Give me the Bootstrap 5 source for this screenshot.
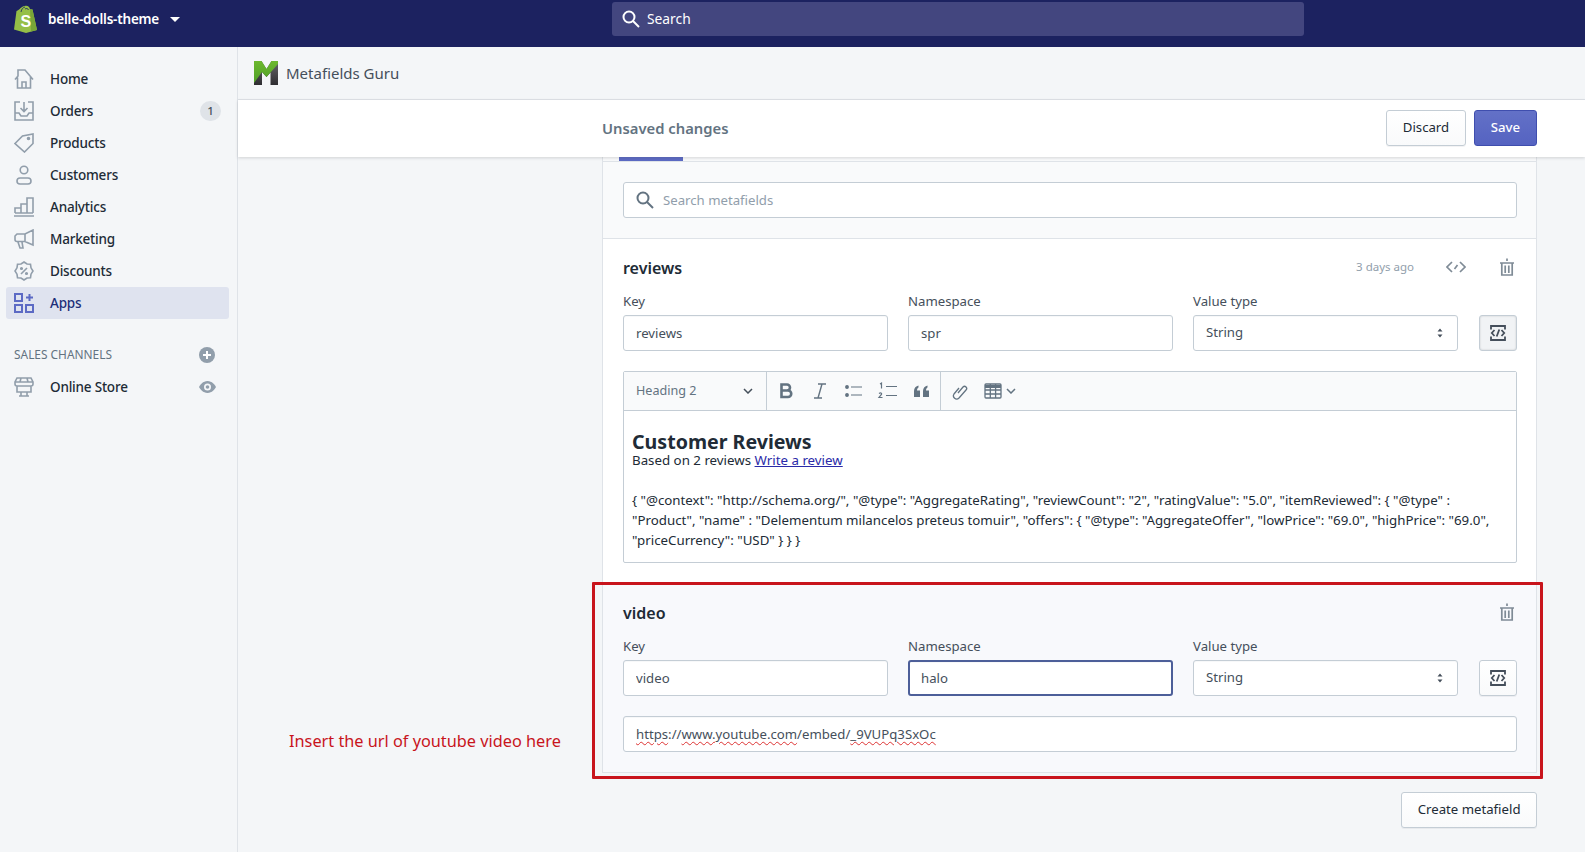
<!DOCTYPE html>
<html lang="en"><head><meta charset="utf-8"><title>Metafields Guru</title>
<link href="https://cdn.jsdelivr.net/npm/bootstrap@5.3.0/dist/css/bootstrap.min.css" rel="stylesheet">
<style>
html,body{height:852px;overflow:hidden}
body{font-family:"Noto Sans","Open Sans",sans-serif;font-size:13.2px;color:#212b36;background:#f4f6f8}
.topbar{height:47px;background:#1c2260;flex:none}
.brand-slot{width:238px;padding-left:13px;gap:10px;margin-top:-9px}
.shop-name{font-size:13.5px;font-weight:600;color:#fff;letter-spacing:-.2px}
.shop-caret{width:0;height:0;border-left:5px solid transparent;border-right:5px solid transparent;border-top:5px solid #fff;margin-left:1px}
.top-search{width:692px;height:34px;margin-left:374px;margin-top:-9px;background:#43467f;border-radius:3px;color:#fff;padding-left:10px;gap:7px;font-size:13.8px}
.side{width:238px;flex:none;border-right:1px solid #dfe3e8;padding-top:16px;padding-left:6px;padding-right:8px}
.nav-row{height:32px;padding-left:8px;gap:16px;color:#212b36;text-decoration:none;font-weight:500;border-radius:3px;font-size:13.5px;letter-spacing:-.2px}
.nav-row svg{width:20px;height:20px;flex:none;color:#919eab}
.nav-row.on{background:#dfe3ef;color:#202e78}
.nav-row.on svg{color:#5c6ac4}
.pill{margin-left:auto;margin-right:8px;width:21px;height:20px;border-radius:10px;background:#dfe3e8;font-size:11.5px;color:#454f5b;letter-spacing:0}
.chan-head{height:32px;margin-top:20px;padding-left:8px;padding-right:14px;color:#637381;font-size:11.9px}
.nav-row svg.right-ico{margin-left:auto;margin-right:13px;width:17px;height:12px}
.work{flex:1;min-width:0;min-height:0}
.appbar{height:53px;padding-left:15px;gap:7px;font-size:15px;color:#454f5b;flex:none;border-bottom:1px solid #dfe3e8}
.savebar{height:57px;background:#fff;box-shadow:0 1px 3px rgba(63,63,68,.2);flex:none;position:relative;z-index:2;padding-left:364px;padding-right:48px}
.save-title{font-size:14.8px;font-weight:600;color:#637381}
.save-btns{margin-top:-2px}
.btn-plain{height:36px;background:linear-gradient(#fff,#f9fafb);border:1px solid #c4cdd5;border-radius:3px;color:#212b36;font-size:13.2px;box-shadow:0 1px 0 rgba(22,29,37,.05);padding:0 15.5px}
.btn-prime{height:36px;background:linear-gradient(#6371c7,#5563c1);border:1px solid #3f4eae;border-radius:3px;color:#fff;font-size:13.2px;font-weight:500;padding:0 16px;margin-left:8px}
.canvas{padding-left:364px;padding-right:48px}
.mf-card{border-radius:0;border:0;border-left:1px solid #dfe3e8;border-right:1px solid #dfe3e8;background:#fff}
.tab-strip{height:4px;background:#f9fafb}
.tab-bar{display:block;width:64px;height:4px;margin-left:16px;background:#5c6ac4}
.find-zone{background:#f9fafb;padding:20px 19px 20px 20px;border-bottom:1px solid #dfe3e8;border-top:1px solid #dfe3e8}
.find-box{height:36px;border:1px solid #c4cdd5;border-radius:3px;background:#fff;padding-left:12px;gap:9px;color:#919eab}
.find-box span{padding-top:2px}
.mf-sec{padding:19px 19px 21px 20px}
.mf-sec.soft{background:#f8f9fc;position:relative;border-bottom:1px solid #dfe3e8;padding-bottom:20px}
.sec-title{font-size:16px;font-weight:600;height:20px;line-height:20px;margin-bottom:15px;color:#212b36}
.meta-group{margin-top:-2px}
.meta-time{font-size:11.5px;color:#919eab;font-weight:400}
.ico-code{margin-left:32px;margin-right:34px}
.ico-bin{margin-right:3px}
.soft .ico-bin{margin-top:-2px}
.field-row{display:flex;gap:20px;align-items:flex-end}
.field-col{width:265px;flex:none}
.field-lab{font-size:13.2px;line-height:17px;color:#454f5b;margin-bottom:5px;display:block}
.mf-input.form-control,.mf-input.form-select{height:36px;border:1px solid #c4cdd5;border-radius:3px;font-size:13.2px;color:#454f5b;padding:0 12px;box-shadow:inset 0 1px 0 rgba(99,115,129,.05)}
.mf-input.form-select{background-color:#fff;background-size:8px 12px;background-position:right 13px center;background-image:url("data:image/svg+xml,%3Csvg xmlns='http://www.w3.org/2000/svg' width='8' height='12'%3E%3Cpath d='M4 1.500l2.500 3h-5zM4 10.500L1.500 7.500h5z' fill='%23454f5b'/%3E%3C/svg%3E")}
.mf-input.lit{border:2px solid #4d5f99;padding-left:11px}
.code-btn{width:38px;height:36px;flex:none;margin-left:1px;padding:0;border:1px solid #c4cdd5;border-radius:3px;background:linear-gradient(#fff,#f9fafb);box-shadow:0 1px 0 rgba(22,29,37,.05);color:#454f5b}
.code-btn.on{background:#f1f3f5;box-shadow:inset 0 0 2px rgba(22,29,37,.2)}
.rte{margin-top:20px;border:1px solid #c4cdd5;border-radius:2px;background:#fff}
.rte-bar{height:39px;background:#f9fafb;border-bottom:1px solid #c4cdd5;color:#637381}
.rte-sel{width:143px;height:100%;border-right:1px solid #c4cdd5;padding:0 13px 0 12px;font-size:12.6px}
.rte-group{height:100%;border-right:1px solid #c4cdd5;width:174px;padding-left:8px;gap:12px}
.rte-tail{padding-left:10px;gap:15px}
.rte-body{padding:19px 19px 10px 8px;font-size:13.3px;line-height:20px;color:#212b36;height:151px}
.rte-h{font-size:19.6px;font-weight:700;line-height:24px;height:24px;margin-bottom:-4px;color:#212b36}
.rte-a{color:#2a2aa8}
.rte-json{margin-top:20px}
.url-box{margin-top:20px;padding-top:0;line-height:35px;height:36px;white-space:nowrap}
.sq{text-decoration:underline wavy #d33;text-decoration-thickness:1px;text-underline-offset:2px}
.red-frame{position:absolute;left:-11px;right:-7px;top:-2px;bottom:-7px;border:3.5px solid #c8141c;border-radius:1px;pointer-events:none}
.red-note{position:absolute;left:-314px;top:145px;color:#c8141c;font-size:16.3px;white-space:nowrap}
.foot-row{padding-top:19px}
</style></head>
<body class="d-flex flex-column">
<header class="topbar d-flex align-items-center">
  <div class="brand-slot d-flex align-items-center">
    <svg width="25" height="28" viewBox="0 0 25 28"><path d="M1 24.500L3.500 6C7 5 8 1 13 .8c2.500 0 3.500 1.500 4 3.500l2.500.3L24 25l-11 3z" fill="#95bf47"/><path d="M17 4.300l2.500.3L24 25l-6 1.500z" fill="#79a637"/><path d="M8 7c.5-3 2-4.500 4-5M12 4c1.500-1 3-.5 3.500 1" fill="none" stroke="#1c2260" stroke-width=".8"/><text x="7.500" y="22" font-family="Liberation Sans" font-weight="700" font-size="16" fill="#fff">S</text></svg>
    <span class="shop-name">belle-dolls-theme</span><span class="shop-caret"></span>
  </div>
  <div class="top-search d-flex align-items-center">
    <svg width="18" height="18" viewBox="0 0 18 18" fill="none" stroke="#fff" stroke-width="2"><circle cx="7" cy="7" r="5.500"/><path d="M11 11l6 6"/></svg><span>Search</span>
  </div>
</header>
<div class="d-flex work">
  <nav class="side">
    <a class="nav-row d-flex align-items-center"><svg viewBox="0 0 20 20" fill="none" stroke="currentColor" stroke-width="1.600"><path d="M1 10.500L4 7V1h4.500L11 1l8 9.500M3.500 8.500V19h13V8M8 19v-6h4v6"/></svg>Home</a>
    <a class="nav-row d-flex align-items-center"><svg viewBox="0 0 20 20" fill="none" stroke="currentColor" stroke-width="1.600"><path d="M6 1H1v18h18V1h-5M1 12h4l2 3h6l2-3h4M10 1v9.500M6.500 7l3.500 3.500L13.500 7"/></svg>Orders<span class="pill d-flex align-items-center justify-content-center">1</span></a>
    <a class="nav-row d-flex align-items-center"><svg viewBox="0 0 20 20" fill="none" stroke="currentColor" stroke-width="1.600"><path d="M1 10.500L8.500 3 19 1v9.500L10.500 19z"/><circle cx="14.500" cy="5.500" r="1" fill="currentColor"/></svg>Products</a>
    <a class="nav-row d-flex align-items-center"><svg viewBox="0 0 20 20" fill="none" stroke="currentColor" stroke-width="1.600"><circle cx="10" cy="5" r="3.800"/><path d="M6 13h8c4 0 4 6 0 6H6c-4 0-4-6 0-6z"/></svg>Customers</a>
    <a class="nav-row d-flex align-items-center"><svg viewBox="0 0 20 20" fill="none" stroke="currentColor" stroke-width="1.600"><path d="M0 19h20M1 16v-5h6v5M7 16V7h6v9M13 16V1h6v15M1 16h18"/></svg>Analytics</a>
    <a class="nav-row d-flex align-items-center"><svg viewBox="0 0 20 20" fill="none" stroke="currentColor" stroke-width="1.600"><path d="M19 1v15l-8-3.500H3a2 2 0 0 1-2-2V7l2-2h8zM4 13l2 6h3l-1-6M11 5v7.500"/></svg>Marketing</a>
    <a class="nav-row d-flex align-items-center"><svg viewBox="0 0 20 20" fill="none" stroke="currentColor" stroke-width="1.600"><path d="M10 1l3 2 3.500.3.500 3.500 2 3.200-2 3.200-.5 3.500-3.500.3-3 2-3-2-3.500-.3L3 13.200 1 10l2-3.200.5-3.500L7 3z"/><path d="M7 13l6-6"/><circle cx="7.500" cy="7.500" r=".8" fill="currentColor"/><circle cx="12.500" cy="12.500" r=".8" fill="currentColor"/></svg>Discounts</a>
    <a class="nav-row on d-flex align-items-center"><svg viewBox="0 0 20 20" fill="none" stroke="currentColor" stroke-width="2"><rect x="1" y="1" width="7" height="7"/><rect x="1" y="12" width="7" height="7"/><rect x="12" y="12" width="7" height="7"/><path d="M15.500 1v7M12 4.500h7"/></svg>Apps</a>
    <div class="chan-head d-flex align-items-center justify-content-between"><span>SALES CHANNELS</span><svg width="16" height="16" viewBox="0 0 16 16"><circle cx="8" cy="8" r="8" fill="#919eab"/><path d="M8 4v8M4 8h8" stroke="#fff" stroke-width="2"/></svg></div>
    <a class="nav-row d-flex align-items-center"><svg viewBox="0 0 20 20" fill="none" stroke="currentColor" stroke-width="1.600"><path d="M3 1h14l2 4v2c0 1-1 2-2 2H3C2 9 1 8 1 7V5zM1 5h18M7 1l-1 4M13 1l1 4M3 9v6h14V9M7 15v4h6v-4M5 19h10"/></svg>Online Store<svg class="right-ico" viewBox="0 0 17 12"><path d="M8.500 0C13 0 16 4 17 6c-1 2-4 6-8.500 6S1 8 0 6c1-2 4-6 8.500-6z" fill="#919eab"/><circle cx="8.500" cy="6" r="3.500" fill="#f4f6f8"/><circle cx="8.500" cy="6" r="1.800" fill="#919eab"/></svg></a>
  </nav>
  <main class="flex-grow-1 d-flex flex-column">
    <div class="appbar d-flex align-items-center">
      <svg width="26" height="26" viewBox="0 0 26 26"><defs><linearGradient id="mg" x1="0" y1="0" x2="0" y2="1"><stop offset="0" stop-color="#6cb82e"/><stop offset="1" stop-color="#4f9f26"/></linearGradient><linearGradient id="md" x1="0" y1="0" x2="0" y2="1"><stop offset="0" stop-color="#67666a"/><stop offset="1" stop-color="#2e2d31"/></linearGradient></defs><path d="M1 1h7.500l5 8 5-8H25v24h-7.500V12.500l-4 4.500-4.500-5v13H1z" fill="url(#md)"/><path d="M1 1h7.500l5 8 5-8H25v3L13.500 17 9 12 1 23z" fill="url(#mg)"/></svg>
      <span>Metafields Guru</span>
    </div>
    <div class="savebar d-flex align-items-center justify-content-between">
      <span class="save-title">Unsaved changes</span>
      <div class="d-flex save-btns"><button class="btn btn-plain">Discard</button><button class="btn btn-prime">Save</button></div>
    </div>
    <div class="canvas">
      <div class="card mf-card">
        <div class="tab-strip"><span class="tab-bar"></span></div>
        <div class="find-zone"><div class="find-box d-flex align-items-center"><svg width="18" height="18" viewBox="0 0 18 18" fill="none" stroke="#637381" stroke-width="2"><circle cx="7" cy="7" r="5.500"/><path d="M11 11l6 6"/></svg><span>Search metafields</span></div></div>
        <section class="mf-sec">
          <div class="d-flex justify-content-between align-items-center sec-title"><span>reviews</span>
            <div class="d-flex align-items-center meta-group">
              <span class="meta-time">3 days ago</span>
              <svg class="ico-code" width="20" height="12" viewBox="0 0 20 12" fill="none" stroke="#7f8b96" stroke-width="1.700"><path d="M6 1L1 6l5 5M14 1l5 5-5 5M8.500 8l3-4"/></svg>
              <svg class="ico-bin" width="14" height="18" viewBox="0 0 14 18" fill="none" stroke="#7f8b96" stroke-width="1.700"><path d="M0 5h14M1.800 5v12h10.400V5M5.200 7.500V15M8.800 7.500V15M7 .5V3"/></svg>
            </div></div>
          <div class="field-row">
            <div class="field-col"><label class="field-lab">Key</label><input class="form-control mf-input" value="reviews"></div>
            <div class="field-col"><label class="field-lab">Namespace</label><input class="form-control mf-input" value="spr"></div>
            <div class="field-col"><label class="field-lab">Value type</label><select class="form-select mf-input"><option>String</option></select></div>
            <button class="btn code-btn on d-flex align-items-center justify-content-center"><svg width="16" height="16" viewBox="0 0 16 16" fill="none" stroke="currentColor" stroke-width="1.800"><path d="M1 4.500V1h14v3.500M1 11.500V15h14v-3.500M4.500 5L1.800 8l2.700 3M11.500 5L14.200 8l-2.700 3M9.300 4.500l-2.600 7"/></svg></button>
          </div>
          <div class="rte">
            <div class="rte-bar d-flex align-items-center">
              <div class="rte-sel d-flex align-items-center justify-content-between"><span>Heading 2</span><svg width="10" height="6" viewBox="0 0 10 6" fill="none" stroke="#454f5b" stroke-width="1.500"><path d="M1 1l4 4 4-4"/></svg></div>
              <div class="rte-group d-flex align-items-center">
                <svg width="22" height="20" viewBox="0 0 22 20" fill="none" stroke="#637381" stroke-width="2.600"><path d="M6.500 3.500h5.500a3 3 0 0 1 0 6H6.500zM6.500 9.500h6.500a3.200 3.200 0 0 1 0 6.500H6.500zM6.500 2.200v15"/></svg>
                <svg width="22" height="20" viewBox="0 0 22 20" fill="none" stroke="#637381" stroke-width="1.400"><path d="M9 3h8M5 17h8M13 3L9 17"/></svg>
                <svg width="22" height="20" viewBox="0 0 22 20" fill="none" stroke="#637381" stroke-width="1.200"><path d="M8 6h11M8 14h11"/><circle cx="4" cy="6" r="1.300" fill="#637381"/><circle cx="4" cy="14" r="1.300" fill="#637381"/></svg>
                <svg width="22" height="20" viewBox="0 0 22 20" fill="none" stroke="#637381" stroke-width="1.200"><path d="M9 5.500h11M9 14.500h11M3 3l1.500-1v5.500M2 12.500c2-1.500 3.500 0 2 1.500L2 16.500h3.500"/></svg>
                <svg width="22" height="20" viewBox="0 0 22 20" fill="#637381"><path d="M3 16V10c0-3 2-5 4.500-5.500v2C6.500 7 6 8 6 9.500h3V16zM12 16V10c0-3 2-5 4.500-5.500v2C15.500 7 15 8 15 9.500h3V16z"/></svg>
              </div>
              <div class="rte-tail d-flex align-items-center">
                <svg width="18" height="18" viewBox="0 0 18 18" fill="none" stroke="#637381" stroke-width="1.300"><path d="M7 11l5-6c2-2 5 1 3 3l-7 8c-3 3-7-1-5-4l5-6"/></svg>
                <div class="d-flex align-items-center gap-1"><svg width="18" height="16" viewBox="0 0 18 16" fill="none" stroke="#637381" stroke-width="1.300"><rect x="1" y="1" width="16" height="14" rx="1"/><path d="M1 3.500h16" stroke-width="3"/><path d="M1 7h16M1 11h16M6.300 1v14M11.600 1v14"/></svg><svg width="10" height="6" viewBox="0 0 10 6" fill="none" stroke="#637381" stroke-width="1.500"><path d="M1 1l4 4 4-4"/></svg></div>
              </div>
            </div>
            <div class="rte-body">
              <div class="rte-h">Customer Reviews</div>
              <div>Based on 2 reviews <a class="rte-a" href="#">Write a review</a></div>
              <div class="rte-json">{ "@context": "http://schema.org/", "@type": "AggregateRating", "reviewCount": "2", "ratingValue": "5.0", "itemReviewed": { "@type" : "Product", "name" : "Delementum milancelos preteus tomuir", "offers": { "@type": "AggregateOffer", "lowPrice": "69.0", "highPrice": "69.0", "priceCurrency": "USD" } } }</div>
            </div>
          </div>
        </section>
        <section class="mf-sec soft">
          <div class="red-frame"></div>
          <div class="red-note">Insert the url of youtube video here</div>
          <div class="d-flex justify-content-between align-items-center sec-title"><span>video</span>
            <svg class="ico-bin" width="14" height="18" viewBox="0 0 14 18" fill="none" stroke="#7f8b96" stroke-width="1.700"><path d="M0 5h14M1.800 5v12h10.400V5M5.200 7.500V15M8.800 7.500V15M7 .5V3"/></svg></div>
          <div class="field-row">
            <div class="field-col"><label class="field-lab">Key</label><input class="form-control mf-input" value="video"></div>
            <div class="field-col"><label class="field-lab">Namespace</label><input class="form-control mf-input lit" value="halo"></div>
            <div class="field-col"><label class="field-lab">Value type</label><select class="form-select mf-input"><option>String</option></select></div>
            <button class="btn code-btn d-flex align-items-center justify-content-center"><svg width="16" height="16" viewBox="0 0 16 16" fill="none" stroke="currentColor" stroke-width="1.800"><path d="M1 4.500V1h14v3.500M1 11.500V15h14v-3.500M4.500 5L1.800 8l2.700 3M11.500 5L14.200 8l-2.700 3M9.300 4.500l-2.600 7"/></svg></button>
          </div>
          <div class="form-control mf-input url-box"><span class="sq">https</span>://<span class="sq">www.youtube.com</span>/embed/<span class="sq">_9VUPq3SxOc</span></div>
        </section>
      </div>
      <div class="foot-row d-flex justify-content-end"><button class="btn btn-plain">Create metafield</button></div>
    </div>
  </main>
</div>
<script src="https://cdn.jsdelivr.net/npm/bootstrap@5.3.0/dist/js/bootstrap.bundle.min.js"></script>
</body></html>
